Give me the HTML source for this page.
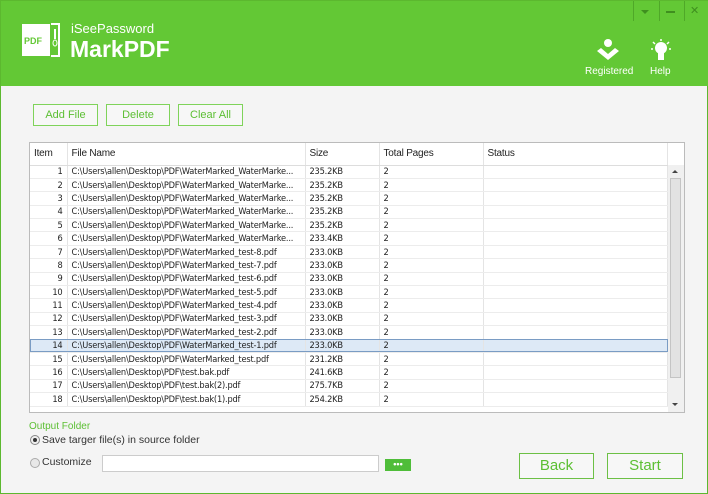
<!DOCTYPE html>
<html><head><meta charset="utf-8"><style>
*{margin:0;padding:0;box-sizing:border-box}
body{width:708px;height:494px;overflow:hidden;background:#f4f4f4;font-family:"Liberation Sans",sans-serif;position:relative;border:1px solid #5cb82f}
.hdr{position:absolute;left:0;top:0;width:708px;height:85px;background:#63c835}
.abs{position:absolute}
.btn{position:absolute;border:1px solid #7fd35a;background:#f7f7f7;color:#5cbf33;font-size:11px;text-align:center}
table{border-collapse:collapse;font-family:"DejaVu Sans Condensed","Liberation Sans",sans-serif;font-size:9.2px;color:#222}
td{height:13.4px;border-right:1px solid #e4e4e4;border-bottom:1px solid #ececec;padding:0 4px;white-space:nowrap;overflow:hidden;letter-spacing:-0.2px}
</style></head><body>
<div class="hdr">
 <svg class="abs" style="left:20px;top:20px" width="40" height="38" viewBox="0 0 40 38"><rect x="1" y="3" width="28" height="32" fill="#fff"/><path d="M30 3h8v32h-8" stroke="#fff" stroke-width="2" fill="none"/><text x="3" y="23" font-size="9" font-weight="bold" fill="#63c835" font-family="Liberation Sans">PDF</text><rect x="33" y="8" width="2" height="10" fill="#fff"/><ellipse cx="34" cy="22" rx="2" ry="3" fill="none" stroke="#fff"/></svg>
 <div class="abs" style="left:70px;top:20px;color:#fff;font-size:13px">iSeePassword</div>
 <div class="abs" style="left:69px;top:35px;color:#fff;font-size:23px;font-weight:bold">MarkPDF</div>
 <div class="abs" style="left:632px;top:0;width:1px;height:20px;background:#4fa828"></div>
 <div class="abs" style="left:658px;top:0;width:1px;height:20px;background:#4fa828"></div>
 <div class="abs" style="left:683px;top:0;width:1px;height:20px;background:#4fa828"></div>
 <div class="abs" style="left:640px;top:9px;border-left:4px solid transparent;border-right:4px solid transparent;border-top:4px solid #3f8f1f"></div>
 <div class="abs" style="left:665px;top:10px;width:9px;height:2px;background:#3f8f1f"></div>
 <div class="abs" style="left:689px;top:3px;color:#3f8f1f;font-size:11px">✕</div>
 <svg class="abs" style="left:594px;top:37px" width="26" height="26" viewBox="0 0 26 26"><circle cx="13" cy="5" r="4" fill="#fff"/><path d="M2 13l11 9 11-9-4-3-7 6-7-6z" fill="#fff"/></svg>
 <div class="abs" style="left:584px;top:65px;color:#fff;font-size:10px">Registered</div>
 <svg class="abs" style="left:649px;top:37px" width="22" height="26" viewBox="0 0 22 26"><circle cx="11" cy="10" r="6" fill="#fff"/><rect x="8" y="14" width="6" height="8" fill="#fff"/><path d="M11 1v2M3 4l2 2M19 4l-2 2M1 11h2M19 11h2" stroke="#fff" stroke-width="1.5"/></svg>
 <div class="abs" style="left:649px;top:65px;color:#fff;font-size:10px">Help</div>
</div>
<div class="btn" style="left:32px;top:103px;width:65px;height:22px;line-height:20px">Add File</div>
<div class="btn" style="left:105px;top:103px;width:64px;height:22px;line-height:20px">Delete</div>
<div class="btn" style="left:177px;top:103px;width:65px;height:22px;line-height:20px">Clear All</div>
<div class="abs" style="left:28px;top:141px;width:656px;height:271px;border:1px solid #bbb;background:#fff;overflow:hidden">
<table style="width:638px">
<tr style="height:22px;font-size:10px;font-family:'Liberation Sans',sans-serif"><td style="width:37px;height:22px;border-bottom:1px solid #ddd">Item</td><td style="width:238px;border-bottom:1px solid #ddd">File Name</td><td style="width:74px;border-bottom:1px solid #ddd">Size</td><td style="width:104px;border-bottom:1px solid #ddd">Total Pages</td><td style="border-bottom:1px solid #ddd">Status</td></tr>
<tr><td align="right">1</td><td>C:\Users\allen\Desktop\PDF\WaterMarked_WaterMarke...</td><td>235.2KB</td><td>2</td><td></td></tr>
<tr><td align="right">2</td><td>C:\Users\allen\Desktop\PDF\WaterMarked_WaterMarke...</td><td>235.2KB</td><td>2</td><td></td></tr>
<tr><td align="right">3</td><td>C:\Users\allen\Desktop\PDF\WaterMarked_WaterMarke...</td><td>235.2KB</td><td>2</td><td></td></tr>
<tr><td align="right">4</td><td>C:\Users\allen\Desktop\PDF\WaterMarked_WaterMarke...</td><td>235.2KB</td><td>2</td><td></td></tr>
<tr><td align="right">5</td><td>C:\Users\allen\Desktop\PDF\WaterMarked_WaterMarke...</td><td>235.2KB</td><td>2</td><td></td></tr>
<tr><td align="right">6</td><td>C:\Users\allen\Desktop\PDF\WaterMarked_WaterMarke...</td><td>233.4KB</td><td>2</td><td></td></tr>
<tr><td align="right">7</td><td>C:\Users\allen\Desktop\PDF\WaterMarked_test-8.pdf</td><td>233.0KB</td><td>2</td><td></td></tr>
<tr><td align="right">8</td><td>C:\Users\allen\Desktop\PDF\WaterMarked_test-7.pdf</td><td>233.0KB</td><td>2</td><td></td></tr>
<tr><td align="right">9</td><td>C:\Users\allen\Desktop\PDF\WaterMarked_test-6.pdf</td><td>233.0KB</td><td>2</td><td></td></tr>
<tr><td align="right">10</td><td>C:\Users\allen\Desktop\PDF\WaterMarked_test-5.pdf</td><td>233.0KB</td><td>2</td><td></td></tr>
<tr><td align="right">11</td><td>C:\Users\allen\Desktop\PDF\WaterMarked_test-4.pdf</td><td>233.0KB</td><td>2</td><td></td></tr>
<tr><td align="right">12</td><td>C:\Users\allen\Desktop\PDF\WaterMarked_test-3.pdf</td><td>233.0KB</td><td>2</td><td></td></tr>
<tr><td align="right">13</td><td>C:\Users\allen\Desktop\PDF\WaterMarked_test-2.pdf</td><td>233.0KB</td><td>2</td><td></td></tr>
<tr style="background:#dde9f6;outline:1px solid #7a9cc4;outline-offset:-1px"><td align="right">14</td><td>C:\Users\allen\Desktop\PDF\WaterMarked_test-1.pdf</td><td>233.0KB</td><td>2</td><td></td></tr>
<tr><td align="right">15</td><td>C:\Users\allen\Desktop\PDF\WaterMarked_test.pdf</td><td>231.2KB</td><td>2</td><td></td></tr>
<tr><td align="right">16</td><td>C:\Users\allen\Desktop\PDF\test.bak.pdf</td><td>241.6KB</td><td>2</td><td></td></tr>
<tr><td align="right">17</td><td>C:\Users\allen\Desktop\PDF\test.bak(2).pdf</td><td>275.7KB</td><td>2</td><td></td></tr>
<tr><td align="right">18</td><td>C:\Users\allen\Desktop\PDF\test.bak(1).pdf</td><td>254.2KB</td><td>2</td><td></td></tr>
</table>
<div class="abs" style="left:638px;top:22px;width:16px;height:248px;background:#f0f0f0"></div>
<div class="abs" style="left:640px;top:35px;width:11px;height:200px;background:#e2e2e2;border:1px solid #c4c4c4"></div>
<div class="abs" style="left:642px;top:27px;border-left:3px solid transparent;border-right:3px solid transparent;border-bottom:3px solid #444"></div>
<div class="abs" style="left:642px;top:260px;border-left:3px solid transparent;border-right:3px solid transparent;border-top:3px solid #444"></div>
</div>
<div class="abs" style="left:28px;top:420px;color:#5cbf33;font-size:10px">Output Folder</div>
<div class="abs" style="left:29px;top:434px;width:10px;height:10px;border-radius:50%;border:1px solid #888;background:#eee"><div style="margin:2px;width:4px;height:4px;border-radius:50%;background:#333"></div></div>
<div class="abs" style="left:41px;top:433px;color:#333;font-size:10.5px">Save targer file(s) in source folder</div>
<div class="abs" style="left:29px;top:457px;width:10px;height:10px;border-radius:50%;border:1px solid #aaa;background:#e8e8e8"></div>
<div class="abs" style="left:41px;top:455px;color:#333;font-size:10.5px">Customize</div>
<div class="abs" style="left:101px;top:454px;width:277px;height:17px;border:1px solid #ccc;background:#fff"></div>
<div class="abs" style="left:384px;top:458px;width:26px;height:12px;background:#4fbd39;color:#fff;font-size:9px;text-align:center;line-height:10px;font-weight:bold">•••</div>
<div class="btn" style="left:518px;top:452px;width:75px;height:26px;line-height:24px;font-size:15px;border-color:#6cc045">Back</div>
<div class="btn" style="left:606px;top:452px;width:76px;height:26px;line-height:24px;font-size:15px;border-color:#6cc045">Start</div>
</body></html>
